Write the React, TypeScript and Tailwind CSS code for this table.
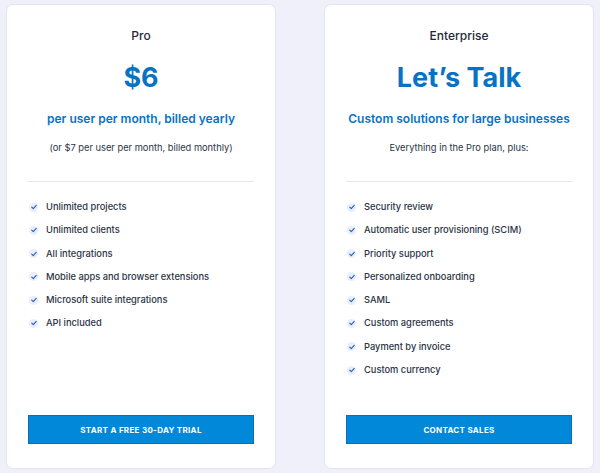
const proFeatures = [
  "Unlimited projects",
  "Unlimited clients",
  "All integrations",
  "Mobile apps and browser extensions",
  "Microsoft suite integrations",
  "API included",
]

const enterpriseFeatures = [
  "Security review",
  "Automatic user provisioning (SCIM)",
  "Priority support",
  "Personalized onboarding",
  "SAML",
  "Custom agreements",
  "Payment by invoice",
  "Custom currency",
]

function Check() {
  return (
    <span className="flex h-[9px] w-[9px] shrink-0 items-center justify-center rounded-full bg-[#e8eefa]">
      <svg viewBox="0 0 10 10" className="h-[8px] w-[8px]" fill="none">
        <path d="M2.2 5.2 L4.1 7 L7.8 3" stroke="#1f5fc9" strokeWidth="1.4" strokeLinecap="round" strokeLinejoin="round" />
      </svg>
    </span>
  )
}

interface PlanProps {
  name: string
  price: string
  tagline: string
  note: string
  features: string[]
  cta: string
}

function Plan({ name, price, tagline, note, features, cta }: PlanProps) {
  return (
    <div className="flex w-[270px] flex-col rounded-[7px] border border-[#e4e4f0] bg-white px-[21px] pb-[24px] pt-[22px]">
      <div className="text-center text-[12px] font-medium leading-[18px] text-[#1f2a3c]">{name}</div>
      <div className="mt-[16px] text-center text-[27px] font-bold leading-[34px] text-[#0873c4]">{price}</div>
      <div className="mt-[15px] whitespace-nowrap text-center text-[12px] font-semibold leading-[18px] text-[#0873c4]">{tagline}</div>
      <div className="mt-[13px] text-center text-[9.3px] leading-[14px] text-[#2b3445]">{note}</div>
      <div className="mt-[26px] h-px bg-[#e6e6ee]" />
      <ul className="mt-[18px] flex flex-col gap-[9.3px]">
        {features.map((f) => (
          <li key={f} className="flex items-center gap-[8px] pl-[1px] text-[9.3px] font-medium leading-[14px] text-[#2b3445]">
            <Check />
            <span>{f}</span>
          </li>
        ))}
      </ul>
      <div className="flex-1" />
      <button className="h-[29px] w-full border border-[#0a6fb8] bg-[#0288d8] text-[8px] font-bold uppercase tracking-[0.3px] text-white">
        {cta}
      </button>
    </div>
  )
}

export default function App() {
  return (
    <div
      className="flex h-[473px] w-[600px] justify-between bg-[#f0f0fa] px-[6px] pb-[4px] pt-[4px]"
      style={{ fontFamily: "Inter, 'Noto Sans', sans-serif" }}
    >
      <Plan
        name="Pro"
        price="$6"
        tagline="per user per month, billed yearly"
        note="(or $7 per user per month, billed monthly)"
        features={proFeatures}
        cta="Start a free 30-day trial"
      />
      <Plan
        name="Enterprise"
        price="Let’s Talk"
        tagline="Custom solutions for large businesses"
        note="Everything in the Pro plan, plus:"
        features={enterpriseFeatures}
        cta="Contact sales"
      />
    </div>
  )
}
